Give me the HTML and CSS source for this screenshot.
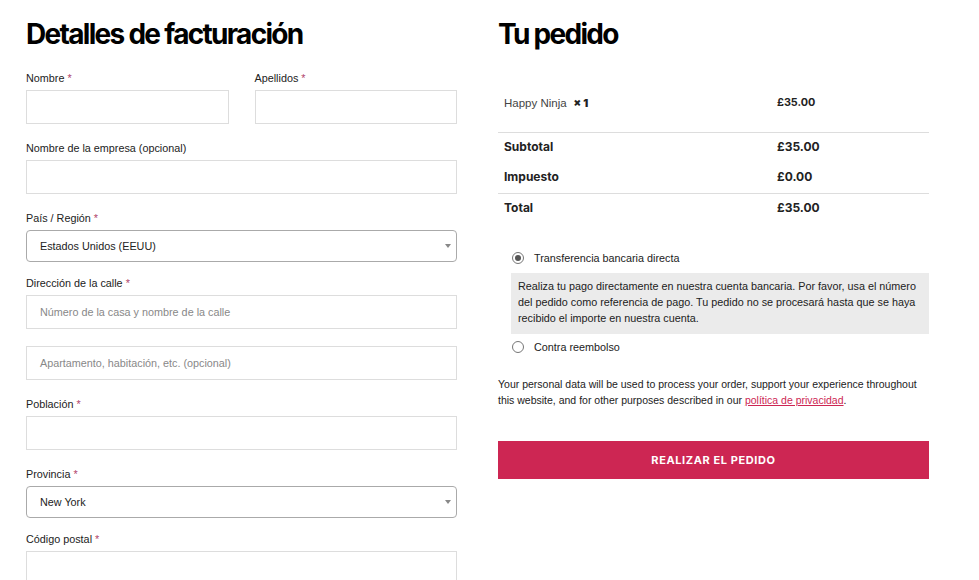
FILE: index.html
```html
<!DOCTYPE html>
<html lang="es">
<head>
    <meta charset="UTF-8">
    <meta name="viewport" content="width=device-width, initial-scale=1.0">
    <title>Finalizar compra</title>
    <link rel="stylesheet" href="styles.css">
</head>
<body>
    <div class="checkout">
        <div class="billing">
            <h2>Detalles de facturación</h2>
            <div class="row-pair">
                <div class="field">
                    <label>Nombre <span class="req">*</span></label>
                    <div class="input"></div>
                </div>
                <div class="field">
                    <label>Apellidos <span class="req">*</span></label>
                    <div class="input"></div>
                </div>
            </div>
            <div class="field">
                <label>Nombre de la empresa (opcional)</label>
                <div class="input"></div>
            </div>
            <div class="field field-select">
                <label>País / Región <span class="req">*</span></label>
                <div class="select">Estados Unidos (EEUU)<span class="arrow"></span></div>
            </div>
            <div class="field field-tight">
                <label>Dirección de la calle <span class="req">*</span></label>
                <div class="input placeholder">Número de la casa y nombre de la calle</div>
            </div>
            <div class="field">
                <div class="input placeholder">Apartamento, habitación, etc. (opcional)</div>
            </div>
            <div class="field">
                <label>Población <span class="req">*</span></label>
                <div class="input"></div>
            </div>
            <div class="field field-select">
                <label>Provincia <span class="req">*</span></label>
                <div class="select">New York<span class="arrow"></span></div>
            </div>
            <div class="field">
                <label>Código postal <span class="req">*</span></label>
                <div class="input"></div>
            </div>
        </div>

        <div class="order">
            <h2>Tu pedido</h2>
            <table class="order-table">
                <tr class="item">
                    <td><span class="product">Happy Ninja</span> <strong class="qty">× 1</strong></td>
                    <td class="price">£35.00</td>
                </tr>
                <tr class="first">
                    <th>Subtotal</th>
                    <td class="price">£35.00</td>
                </tr>
                <tr>
                    <th>Impuesto</th>
                    <td class="price">£0.00</td>
                </tr>
                <tr class="total">
                    <th>Total</th>
                    <td class="price">£35.00</td>
                </tr>
            </table>

            <ul class="payment">
                <li>
                    <span class="radio checked"></span>
                    <span>Transferencia bancaria directa</span>
                </li>
                <li class="payment-box">
                    Realiza tu pago directamente en nuestra cuenta bancaria. Por favor, usa el número del pedido como referencia de pago. Tu pedido no se procesará hasta que se haya recibido el importe en nuestra cuenta.
                </li>
                <li>
                    <span class="radio"></span>
                    <span>Contra reembolso</span>
                </li>
            </ul>

            <p class="privacy">Your personal data will be used to process your order, support your experience throughout this website, and for other purposes described in our <a href="#">política de privacidad</a>.</p>

            <button class="place-order">REALIZAR EL PEDIDO</button>
        </div>
    </div>
</body>
</html>
```

FILE: styles.css
```css
body {
    margin: 0;
    font-family: "Liberation Sans", Arial, sans-serif;
    font-size: 10.8px;
    color: #222;
    background: #fff;
}
.checkout {
    display: flex;
    gap: 41px;
    padding: 0 50px 0 26px;
}
.billing,
.order {
    width: 431px;
}
h2 {
    font-family: Inter, "Liberation Sans", sans-serif;
    font-size: 28px;
    font-weight: 700;
    letter-spacing: -1.7px;
    line-height: 34px;
    margin: 17px 0 19px;
    color: #000;
}
.row-pair {
    display: flex;
    gap: 26px;
}
.row-pair .field {
    flex: 1;
}
.field {
    margin-bottom: 16px;
}
.field label {
    display: block;
    line-height: 17px;
    margin-bottom: 3px;
}
.req {
    color: #b0436a;
}
.input {
    box-sizing: border-box;
    height: 34px;
    border: 1px solid #ddd;
    padding: 0 13px;
    line-height: 32px;
}
.placeholder {
    color: #888;
}
.field-select {
    margin-bottom: 13px;
}
.field-tight {
    margin-bottom: 17px;
}
.select {
    position: relative;
    box-sizing: border-box;
    height: 32px;
    border: 1px solid #aaa;
    border-radius: 4px;
    padding: 0 13px;
    line-height: 30px;
    color: #222;
}
.arrow {
    position: absolute;
    right: 5px;
    top: 13px;
    border-left: 3px solid transparent;
    border-right: 3px solid transparent;
    border-top: 4px solid #888;
}

.order-table {
    width: 100%;
    border-collapse: collapse;
    margin-top: 27px;
    font-family: Inter, "Liberation Sans", sans-serif;
    font-size: 12px;
}
.order-table td,
.order-table th {
    text-align: left;
    padding: 0 6px 3px;
    height: 27px;
    font-weight: 700;
}
.order-table th {
    width: 261px;
}
.order-table .item td {
    height: 48px;
    padding-bottom: 6px;
}
.product {
    font-family: "Liberation Sans", Arial, sans-serif;
    font-size: 11.5px;
    color: #444;
    font-weight: 400;
    margin-right: 4px;
}
.qty {
    font-size: 11px;
}
.order-table .item .price {
    font-size: 10.8px;
}
.order-table .first th,
.order-table .first td,
.order-table .total th,
.order-table .total td {
    border-top: 1px solid #ddd;
}

.payment {
    list-style: none;
    margin: 21px 0 0 13px;
    padding: 0;
}
.payment li {
    display: flex;
    align-items: center;
    gap: 10px;
    line-height: 26px;
}
.payment .payment-box {
    display: block;
    background: #ebebeb;
    padding: 5px 7px 8px;
    line-height: 16px;
    margin: 2px 0 0;
}
.radio {
    box-sizing: border-box;
    width: 12px;
    height: 12px;
    border: 1px solid #767676;
    border-radius: 50%;
    position: relative;
    margin-left: 1px;
}
.radio.checked::after {
    content: "";
    position: absolute;
    left: 2px;
    top: 2px;
    width: 6px;
    height: 6px;
    border-radius: 50%;
    background: #555;
}

.privacy {
    margin: 16px 0 0;
    font-size: 10.5px;
    line-height: 16px;
}
.privacy a {
    color: #cd2653;
}
.place-order {
    display: block;
    width: 100%;
    height: 38px;
    margin-top: 33px;
    border: none;
    background: #cd2653;
    color: #fff;
    font-family: Inter, "Liberation Sans", sans-serif;
    font-size: 11px;
    font-weight: 700;
    letter-spacing: 0.6px;
    cursor: pointer;
}
```
